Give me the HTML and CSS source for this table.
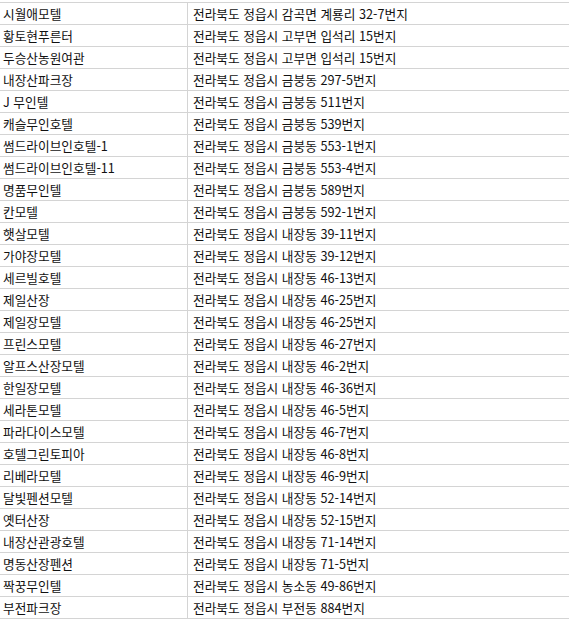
FILE: index.html
```html
<!DOCTYPE html>
<html lang="ko">
<head>
<meta charset="utf-8">
<link rel="stylesheet" href="styles.css">
</head>
<body>
<table class="list">
<tbody>
<tr><td class="name">시월애모텔</td><td class="addr">전라북도 정읍시 감곡면 계룡리 32-7번지</td></tr>
<tr><td class="name">황토현푸른터</td><td class="addr">전라북도 정읍시 고부면 입석리 15번지</td></tr>
<tr><td class="name">두승산농원여관</td><td class="addr">전라북도 정읍시 고부면 입석리 15번지</td></tr>
<tr><td class="name">내장산파크장</td><td class="addr">전라북도 정읍시 금붕동 297-5번지</td></tr>
<tr><td class="name">J 무인텔</td><td class="addr">전라북도 정읍시 금붕동 511번지</td></tr>
<tr><td class="name">캐슬무인호텔</td><td class="addr">전라북도 정읍시 금붕동 539번지</td></tr>
<tr><td class="name">썸드라이브인호텔-1</td><td class="addr">전라북도 정읍시 금붕동 553-1번지</td></tr>
<tr><td class="name">썸드라이브인호텔-11</td><td class="addr">전라북도 정읍시 금붕동 553-4번지</td></tr>
<tr><td class="name">명품무인텔</td><td class="addr">전라북도 정읍시 금붕동 589번지</td></tr>
<tr><td class="name">칸모텔</td><td class="addr">전라북도 정읍시 금붕동 592-1번지</td></tr>
<tr><td class="name">햇살모텔</td><td class="addr">전라북도 정읍시 내장동 39-11번지</td></tr>
<tr><td class="name">가야장모텔</td><td class="addr">전라북도 정읍시 내장동 39-12번지</td></tr>
<tr><td class="name">세르빌호텔</td><td class="addr">전라북도 정읍시 내장동 46-13번지</td></tr>
<tr><td class="name">제일산장</td><td class="addr">전라북도 정읍시 내장동 46-25번지</td></tr>
<tr><td class="name">제일장모텔</td><td class="addr">전라북도 정읍시 내장동 46-25번지</td></tr>
<tr><td class="name">프린스모텔</td><td class="addr">전라북도 정읍시 내장동 46-27번지</td></tr>
<tr><td class="name">알프스산장모텔</td><td class="addr">전라북도 정읍시 내장동 46-2번지</td></tr>
<tr><td class="name">한일장모텔</td><td class="addr">전라북도 정읍시 내장동 46-36번지</td></tr>
<tr><td class="name">세라톤모텔</td><td class="addr">전라북도 정읍시 내장동 46-5번지</td></tr>
<tr><td class="name">파라다이스모텔</td><td class="addr">전라북도 정읍시 내장동 46-7번지</td></tr>
<tr><td class="name">호텔그린토피아</td><td class="addr">전라북도 정읍시 내장동 46-8번지</td></tr>
<tr><td class="name">리베라모텔</td><td class="addr">전라북도 정읍시 내장동 46-9번지</td></tr>
<tr><td class="name">달빛펜션모텔</td><td class="addr">전라북도 정읍시 내장동 52-14번지</td></tr>
<tr><td class="name">옛터산장</td><td class="addr">전라북도 정읍시 내장동 52-15번지</td></tr>
<tr><td class="name">내장산관광호텔</td><td class="addr">전라북도 정읍시 내장동 71-14번지</td></tr>
<tr><td class="name">명동산장펜션</td><td class="addr">전라북도 정읍시 내장동 71-5번지</td></tr>
<tr><td class="name">짝꿍무인텔</td><td class="addr">전라북도 정읍시 농소동 49-86번지</td></tr>
<tr><td class="name">부전파크장</td><td class="addr">전라북도 정읍시 부전동 884번지</td></tr>
</tbody>
</table>
</body>
</html>
```

FILE: styles.css
```css
html, body {
  margin: 0;
  padding: 0;
  background: #ffffff;
}
body {
  padding-top: 2px;
  font-family: "Noto Sans CJK KR", "Noto Sans", sans-serif;
  font-size: 12.7px;
  color: #111111;
}
.list {
  border-collapse: collapse;
  width: 569px;
  table-layout: fixed;
}
.list td {
  height: 21px;
  padding: 0;
  line-height: 21px;
  border-top: 1px solid #d4d4d4;
  border-bottom: 1px solid #d4d4d4;
  white-space: nowrap;
  overflow: hidden;
}
.list .name {
  width: 184px;
  padding-left: 3px;
  border-right: 1px solid #d4d4d4;
}
.list .addr {
  padding-left: 5px;
}
```
